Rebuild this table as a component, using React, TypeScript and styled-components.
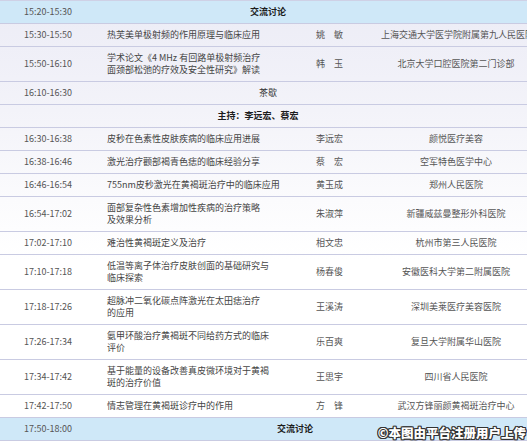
import React from "react";
import styled, { createGlobalStyle } from "styled-components";

const Global = createGlobalStyle`
  html, body { margin: 0; padding: 0; overflow: hidden; background: #fff; }
  * { box-sizing: border-box; }
`;

const Page = styled.div`
  position: relative;
  width: 527px;
  height: 442px;
  overflow: hidden;
  background: linear-gradient(180deg, #ececf6 0px, #f3f3f9 110px, #fbfbfd 200px, #ffffff 260px);
  font-family: "Noto Sans CJK SC", "Noto Sans", sans-serif;
  font-size: 9px;
`;

const Table = styled.div`
  width: 531px;
  display: flex;
  flex-direction: column;
  border-top: 1px solid #cfd1e6;
`;

const Row = styled.div<{ $blue?: boolean }>`
  display: grid;
  grid-template-columns: 96px 210px 75px 150px;
  align-items: center;
  padding: 5px 0;
  line-height: 12px;
  border-bottom: 1px solid #c9cbe2;
  background: ${(p) => (p.$blue ? "#cfe8f8" : "transparent")};
`;

const Time = styled.div`
  text-align: center;
  color: #555;
  white-space: nowrap;
`;

const Topic = styled.div`
  padding-left: 11px;
  color: #444;
  white-space: nowrap;
`;

const Speaker = styled.div`
  padding-left: 10px;
  color: #555;
  white-space: nowrap;
`;

const Org = styled.div`
  text-align: center;
  color: #555;
  white-space: nowrap;
`;

const Title = styled.div<{ $shift: number; $bold?: boolean; $full?: boolean }>`
  grid-column: ${(p) => (p.$full ? "1 / -1" : "2 / -1")};
  text-align: center;
  padding-right: ${(p) => (p.$shift > 0 ? p.$shift : 0)}px;
  padding-left: ${(p) => (p.$shift < 0 ? -p.$shift : 0)}px;
  color: ${(p) => (p.$bold ? "#1c1c1c" : "#333")};
  font-weight: ${(p) => (p.$bold ? 700 : 400)};
  white-space: nowrap;
`;

const Mark = styled.div`
  position: absolute;
  right: 1px;
  bottom: 2px;
  font-family: "Noto Sans CJK SC", sans-serif;
  font-size: 12.5px;
  font-weight: 900;
  line-height: 15px;
  color: #fff;
  white-space: nowrap;
  text-shadow: 1px 0 0 #333, -1px 0 0 #333, 0 1px 0 #333, 0 -1px 0 #333,
    1px 1px 0 #333, -1px -1px 0 #333, 1px -1px 0 #333, -1px 1px 0 #333;
`;

type Item =
  | { kind: "session"; time?: string; title: string; shift: number; bold?: boolean; full?: boolean }
  | { kind: "talk"; time: string; topic: string[]; speaker: string; org: string };

const rows: Item[] = [
  { kind: "session", time: "15:20-15:30", title: "交流讨论", shift: 91, bold: true },
  { kind: "talk", time: "15:30-15:50", topic: ["热芙美单极射频的作用原理与临床应用"], speaker: "姚　敏", org: "上海交通大学医学院附属第九人民医院" },
  { kind: "talk", time: "15:50-16:10", topic: ["学术论文《4 MHz 有回路单极射频治疗", "面颈部松弛的疗效及安全性研究》解读"], speaker: "韩　玉", org: "北京大学口腔医院第二门诊部" },
  { kind: "session", time: "16:10-16:30", title: "茶歇", shift: 91 },
  { kind: "session", title: "主持：李远宏、蔡宏", shift: 15, bold: true, full: true },
  { kind: "talk", time: "16:30-16:38", topic: ["皮秒在色素性皮肤疾病的临床应用进展"], speaker: "李远宏", org: "颜悦医疗美容" },
  { kind: "talk", time: "16:38-16:46", topic: ["激光治疗颧部褐青色痣的临床经验分享"], speaker: "蔡　宏", org: "空军特色医学中心" },
  { kind: "talk", time: "16:46-16:54", topic: ["755nm皮秒激光在黄褐斑治疗中的临床应用"], speaker: "黄玉成", org: "郑州人民医院" },
  { kind: "talk", time: "16:54-17:02", topic: ["面部复杂性色素增加性疾病的治疗策略", "及效果分析"], speaker: "朱淑萍", org: "新疆威兹曼整形外科医院" },
  { kind: "talk", time: "17:02-17:10", topic: ["难治性黄褐斑定义及治疗"], speaker: "相文忠", org: "杭州市第三人民医院" },
  { kind: "talk", time: "17:10-17:18", topic: ["低温等离子体治疗皮肤创面的基础研究与", "临床探索"], speaker: "杨春俊", org: "安徽医科大学第二附属医院" },
  { kind: "talk", time: "17:18-17:26", topic: ["超脉冲二氧化碳点阵激光在太田痣治疗", "的应用"], speaker: "王溪涛", org: "深圳美莱医疗美容医院" },
  { kind: "talk", time: "17:26-17:34", topic: ["氨甲环酸治疗黄褐斑不同给药方式的临床", "评价"], speaker: "乐百爽", org: "复旦大学附属华山医院" },
  { kind: "talk", time: "17:34-17:42", topic: ["基于能量的设备改善真皮微环境对于黄褐", "斑的治疗价值"], speaker: "王思宇", org: "四川省人民医院" },
  { kind: "talk", time: "17:42-17:50", topic: ["情志管理在黄褐斑诊疗中的作用"], speaker: "方　锋", org: "武汉方锋丽颜黄褐斑治疗中心" },
  { kind: "session", time: "17:50-18:00", title: "交流讨论", shift: 37, bold: true },
];

export default function App() {
  return (
    <Page>
      <Global />
      <Table>
        {rows.map((r, i) =>
          r.kind === "session" ? (
            <Row key={i} $blue={r.bold && !r.full}>
              {!r.full && <Time>{r.time}</Time>}
              <Title $shift={r.shift} $bold={r.bold} $full={r.full}>
                {r.title}
              </Title>
            </Row>
          ) : (
            <Row key={i}>
              <Time>{r.time}</Time>
              <Topic>
                {r.topic.map((l, j) => (
                  <div key={j}>{l}</div>
                ))}
              </Topic>
              <Speaker>{r.speaker}</Speaker>
              <Org>{r.org}</Org>
            </Row>
          )
        )}
      </Table>
      <Mark>©本图由平台注册用户上传</Mark>
    </Page>
  );
}
